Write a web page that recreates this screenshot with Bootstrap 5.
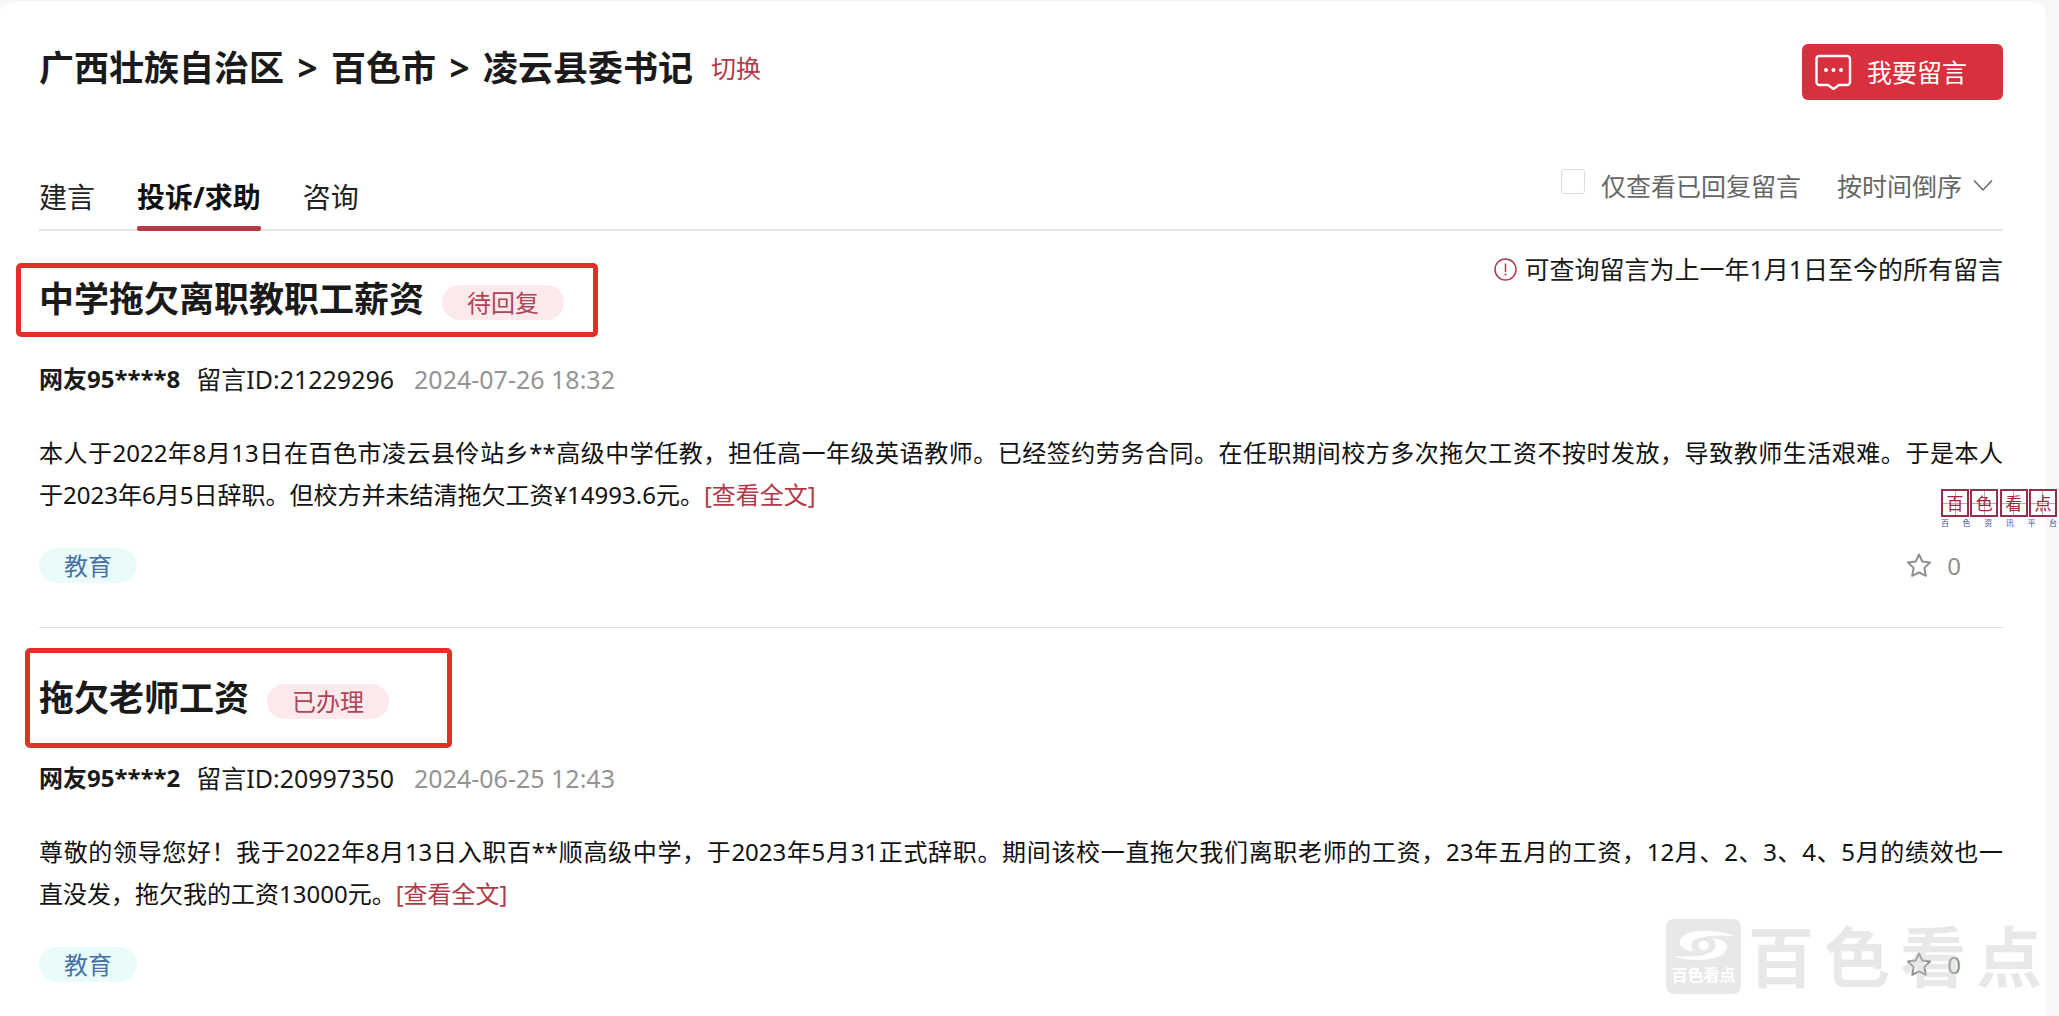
<!DOCTYPE html>
<html lang="zh-CN">
<head>
<meta charset="utf-8">
<meta name="viewport" content="width=device-width, initial-scale=1">
<title>凌云县委书记 - 留言</title>
<link href="https://cdn.jsdelivr.net/npm/bootstrap@5.3.0/dist/css/bootstrap.min.css" rel="stylesheet">
<style>
  body { background: #f6f7f9; color: #1a1a1a; font-family: "Noto Sans", "Noto Sans CJK SC", sans-serif; font-size: 24px; line-height: 36px; }
  .page-shell { min-height: 100vh; padding: 2px 14px 0 0; }
  .panel { min-height: calc(100vh - 2px); background: #fff; border-radius: 12px 12px 0 0; padding: 42px 42px 0 39px; }
  .crumbs { font-size: 35px; line-height: 48px; font-weight: 700; color: #1a1a1a; }
  .crumb-sep { width: 47px; height: 48px; }
  .red-link { color: #b23a48; text-decoration: none; }
  .crumbs .red-link { font-size: 25px; font-weight: 400; margin-left: 18px; }
  .post-btn { width: 201px; height: 56px; background: #d7303f; color: #fff; border: 0; border-radius: 6px; font-size: 25px; line-height: 36px; padding: 0 13px; gap: 15px; }
  .post-btn:hover { background: #c02735; color: #fff; }
  .tab-row { margin-top: 68px; border-bottom: 2px solid #e4e4e4; }
  .tab-list { gap: 42px; padding-top: 10px; margin-bottom: -2px; }
  .tab-list .nav-link { padding: 0; font-size: 28px; line-height: 38px; color: #222; border: 0; }
  .tab-list .nav-link.active { font-weight: 700; color: #111; }
  .tab-list .nav-link::after { content: ""; display: block; height: 5px; margin-top: 10px; border-radius: 2px; }
  .tab-list .nav-link.active::after { background: #b53a45; }
  .filters { color: #666; gap: 36px; height: 36px; font-size: 25px; }
  .filters .form-check-input { width: 24px; height: 25px; margin: 1px 16px 0 0; border: 1px solid #ddd; border-radius: 3px; }
  .sort-box { position: relative; }
  .sort-box select { appearance: none; border: 0; background: none; color: #666; padding: 0 40px 0 0; line-height: 34px; height: 36px; }
  .sort-box svg { position: absolute; right: 10px; top: 11px; pointer-events: none; }
  .notice { margin-top: 21px; gap: 7px; font-size: 25px; line-height: 34px; }
  .entry { border-bottom: 1px solid #e2e2e2; padding-bottom: 44px; }
  .entry:last-child { border: 0; padding-bottom: 0; }
  .entry-title { padding-top: 44px; gap: 18px; position: relative; }
  .entry + .entry .entry-title { padding-top: 46px; }
  .entry-title h2 { font-size: 35px; line-height: 48px; font-weight: 700; margin: 0; }
  .outline-box { position: absolute; border: 5px solid #e03128; border-radius: 5px; pointer-events: none; }
  .outline-a { left: -23px; right: -34px; top: 32px; height: 74px; }
  .outline-b { left: -14px; right: -63px; top: 20px; height: 100px; }
  .pill { border-radius: 18px; height: 35px; line-height: 35px; padding: 0 25px; }
  .pill-state { background: #fbe9eb; color: #b04458; margin-top: 6px; }
  .pill-topic { background: #e9fcfa; color: #4671a5; text-decoration: none; }
  .meta { margin-top: 40px; line-height: 32px; gap: 20px; font-size: 25px; }
  .meta strong { font-size: 24px; margin-right: -4px; }
  .meta time { color: #949494; }
  .entry-text { margin: 37px 0 32px; line-height: 42px; color: #111; text-align: justify; }
  .star-btn { border: 0; background: none; padding: 0; color: #8f8f8f; gap: 15px; margin-right: 42px; height: 35px; }
  .stamp { position: absolute; right: 2px; top: 489px; width: 116px; }
  .stamp-cell { width: 28px; height: 28px; border: 2px solid #95304a; color: #a02540; font: 17px/23px "Noto Sans CJK SC", sans-serif; text-align: center; background: linear-gradient(#c9a5ae, #c9a5ae) center / 1px 100% no-repeat, linear-gradient(#c9a5ae, #c9a5ae) center / 100% 1px no-repeat, #fff; }
  .stamp-sub { font-size: 8px; line-height: 11px; color: #4850a0; }
  .brandmark { position: absolute; right: 17px; top: 919px; gap: 7px; color: rgba(197, 202, 201, .42); pointer-events: none; }
  .brandmark-text { font: 700 66px/68px "Noto Sans CJK SC", sans-serif; gap: 10px; padding-bottom: 7px; }
</style>
<script src="https://cdn.jsdelivr.net/npm/bootstrap@5.3.0/dist/js/bootstrap.bundle.min.js"></script>
</head>
<body>
<div class="page-shell position-relative">
  <main class="panel">
    <header class="d-flex justify-content-between align-items-start">
      <h1 class="crumbs d-flex mb-0">
        <span>广西壮族自治区</span>
        <span class="crumb-sep text-center">&gt;</span>
        <span>百色市</span>
        <span class="crumb-sep text-center">&gt;</span>
        <span>凌云县委书记</span>
        <a class="red-link" href="#">切换</a>
      </h1>
      <button type="button" class="post-btn btn d-flex align-items-center">
        <svg width="37" height="36" viewBox="0 0 37 36" fill="none" stroke="#fff" stroke-width="2.4" stroke-linejoin="round" aria-hidden="true"><path d="M4 2h28a3 3 0 0 1 3 3v23a3 3 0 0 1-3 3h-8l-5.500 4-5.500-4H4.500a3 3 0 0 1-3-3V5a3 3 0 0 1 2.500-3z"/><g fill="#fff" stroke="none"><circle cx="11" cy="16" r="2"/><circle cx="18.500" cy="16" r="2"/><circle cx="26" cy="16" r="2"/></g></svg>
        <span>我要留言</span>
      </button>
    </header>

    <div class="tab-row d-flex justify-content-between align-items-start">
      <ul class="tab-list nav">
        <li class="nav-item"><a class="nav-link" href="#">建言</a></li>
        <li class="nav-item"><a class="nav-link active" aria-current="page" href="#">投诉/求助</a></li>
        <li class="nav-item"><a class="nav-link" href="#">咨询</a></li>
      </ul>
      <div class="filters d-flex">
        <div class="d-flex align-items-start">
          <input class="form-check-input" type="checkbox" id="replied">
          <label for="replied">仅查看已回复留言</label>
        </div>
        <div class="sort-box">
          <select aria-label="排序"><option>按时间倒序</option></select>
          <svg width="20" height="13" viewBox="0 0 20 13" fill="none" stroke="#666" stroke-width="1.500" aria-hidden="true"><path d="M1 1.500l9 9.500 9-9.500"/></svg>
        </div>
      </div>
    </div>

    <article class="entry">
      <div class="d-flex justify-content-between align-items-start">
        <div class="entry-title d-flex align-items-center">
          <h2>中学拖欠离职教职工薪资</h2>
          <span class="pill pill-state">待回复</span>
          <span class="outline-box outline-a"></span>
        </div>
        <div class="notice d-flex align-items-center">
          <svg width="23" height="23" viewBox="0 0 23 23" fill="none" stroke="#b23a48" stroke-width="1.500" aria-hidden="true"><circle cx="11.500" cy="11.500" r="10.500"/><path d="M11.500 5.500v8.500M11.500 15.500v2"/></svg>
          <span>可查询留言为上一年1月1日至今的所有留言</span>
        </div>
      </div>
      <div class="meta d-flex"><strong>网友95****8</strong><span>留言ID:21229296</span><time>2024-07-26 18:32</time></div>
      <p class="entry-text">本人于2022年8月13日在百色市凌云县伶站乡**高级中学任教，担任高一年级英语教师。已经签约劳务合同。在任职期间校方多次拖欠工资不按时发放，导致教师生活艰难。于是本人<span class="text-nowrap">于2023年</span>6月5日辞职。但校方并未结清拖欠工资¥14993.6元。<a class="red-link" href="#">[查看全文]</a></p>
      <div class="d-flex justify-content-between align-items-start">
        <a class="pill pill-topic" href="#">教育</a>
        <button type="button" class="star-btn d-flex align-items-center">
          <svg width="26" height="25" viewBox="0 0 26 25" fill="none" stroke="currentColor" stroke-width="2" stroke-linejoin="round" aria-hidden="true"><path d="M13 1.500l3.300 7 7.700 1-5.600 5.400 1.400 7.900-6.800-3.500-6.800 3.500 1.400-7.900L2 9.500l7.700-1z"/></svg>
          <span>0</span>
        </button>
      </div>
    </article>

    <article class="entry">
      <div class="d-flex justify-content-between align-items-start">
        <div class="entry-title d-flex align-items-center">
          <h2>拖欠老师工资</h2>
          <span class="pill pill-state">已办理</span>
          <span class="outline-box outline-b"></span>
        </div>
      </div>
      <div class="meta d-flex"><strong>网友95****2</strong><span>留言ID:20997350</span><time>2024-06-25 12:43</time></div>
      <p class="entry-text">尊敬的领导您好！我于2022年8月13日入职百**顺高级中学，于2023年5月31正式辞职。期间该校一直拖欠我们离职老师的工资，23年五月的工资，12月、2、3、4、5月的绩效也一<span class="text-nowrap">直没发，</span>拖欠我的工资13000元。<a class="red-link" href="#">[查看全文]</a></p>
      <div class="d-flex justify-content-between align-items-start">
        <a class="pill pill-topic" href="#">教育</a>
        <button type="button" class="star-btn d-flex align-items-center">
          <svg width="26" height="25" viewBox="0 0 26 25" fill="none" stroke="currentColor" stroke-width="2" stroke-linejoin="round" aria-hidden="true"><path d="M13 1.500l3.300 7 7.700 1-5.600 5.400 1.400 7.900-6.800-3.500-6.800 3.500 1.400-7.900L2 9.500l7.700-1z"/></svg>
          <span>0</span>
        </button>
      </div>
    </article>
  </main>

  <aside class="stamp">
    <div class="d-flex justify-content-between">
      <span class="stamp-cell">百</span><span class="stamp-cell">色</span><span class="stamp-cell">看</span><span class="stamp-cell">点</span>
    </div>
    <div class="stamp-sub d-flex justify-content-between"><span>百</span><span>色</span><span>资</span><span>讯</span><span>平</span><span>台</span></div>
  </aside>

  <div class="brandmark d-flex align-items-center">
    <svg width="75" height="75" viewBox="0 0 75 75" aria-hidden="true">
      <rect width="75" height="75" rx="8" fill="currentColor"/>
      <path d="M69 17C48 9 16 10 14 22c-1 7 7 10 15 10-6-4-5-11 4-13 10-3 22-3 36-2z" fill="#fff"/>
      <path d="M6 37c21 7 52 5 55-8 1-6-6-9-15-10 6 5 5 12-3 15-9 4-22 4-37 3z" fill="#fff"/>
      <circle cx="37.500" cy="26.500" r="5" fill="#fff"/>
      <text x="37.500" y="62" text-anchor="middle" font-family="Noto Sans CJK SC, sans-serif" font-weight="700" font-size="16" fill="#fff">百色看点</text>
    </svg>
    <div class="brandmark-text d-flex"><span>百</span><span>色</span><span>看</span><span>点</span></div>
  </div>
</div>
</body>
</html>
